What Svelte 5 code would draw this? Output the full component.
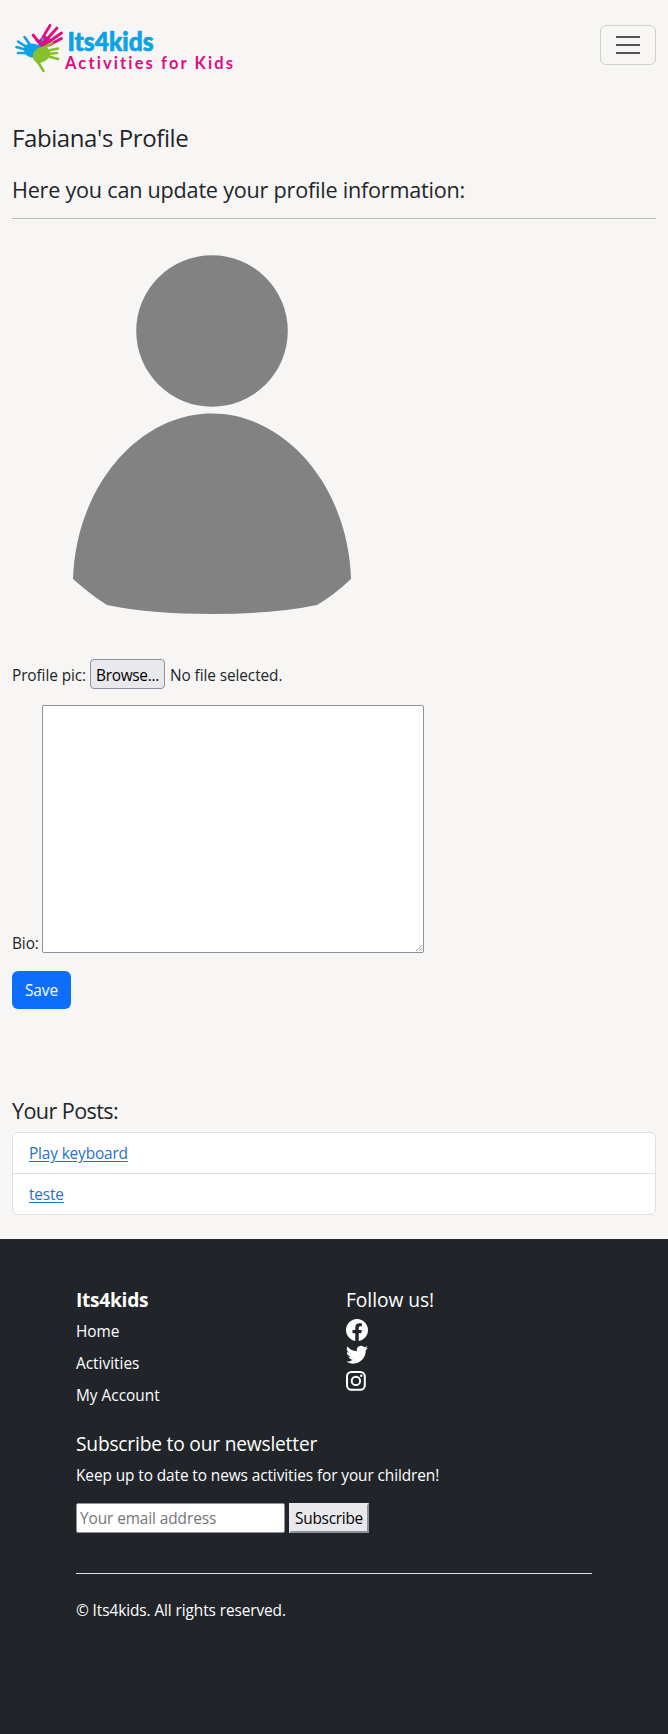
<script>
  const posts = ['Play keyboard', 'teste'];
  const links = ['Home', 'Activities', 'My Account'];
</script>

<div class="page">
  <header>
    <svg class="logo" width="236" height="66" viewBox="0 12 236 66" role="img" aria-label="Its4kids">
      <g stroke="#0fa1e6" stroke-linecap="round" stroke-linejoin="round" fill="none">
        <path stroke-width="2.600" d="M31 46L24.500 37M28 48L18 41.500M27 50L16.500 47M28 53L18 53" />
        <path fill="#0fa1e6" stroke-width="1.500" d="M25 46Q31 43 36 45L41 46L43 49L34 57Q28 57 25 52Z" />
      </g>
      <g stroke="#df0d83" stroke-linecap="round" stroke-linejoin="round" fill="none">
        <path stroke-width="2.800" d="M43 37L50 25.500M47 39L57 28M50 41L61.500 33M51 44L61.500 38.500M38 41L33 35" />
        <path fill="#df0d83" stroke-width="1.500" d="M36 40L39 41L44 36L51 40L51 45L45 47L40 45Z" />
      </g>
      <path fill="#0fa1e6" d="M41 39l2.500-2 1 3-3 2z" />
      <g stroke="#86c02b" stroke-linecap="round" stroke-linejoin="round" fill="none">
        <path stroke-width="2.600" d="M46 51L58 48.500M48 54L57 53M47 56L58 59M43 48L52 43M38 62L43.500 71" />
        <path fill="#86c02b" stroke-width="1.500" d="M34 53Q37 48 46 47L50 53Q48 60 42 61.500L38 63Q32 59 34 53Z" />
      </g>
      <text class="brand" x="67.500" y="50.500" textLength="86" lengthAdjust="spacingAndGlyphs">Its4kids</text>
      <text class="tagline" x="65" y="69" textLength="168">Activities for Kids</text>
    </svg>
    <button class="toggler" aria-label="Menu">
      <svg width="30" height="30" viewBox="0 0 30 30"><path stroke="#545556" stroke-width="2" d="M3 7h24M3 15h24M3 23h24" /></svg>
    </button>
  </header>

  <main>
    <h1>Fabiana's Profile</h1>
    <h2>Here you can update your profile information:</h2>
    <hr />
    <svg class="avatar" width="400" height="400" viewBox="12 235 400 400" fill="#828282">
      <circle cx="212" cy="331" r="75.800" />
      <path d="M73 579C76 486 139 413.500 212 413.500S348 486 351 579Q334 595 317 605Q274 614 212 614T107 605Q91 595 73 579Z" />
    </svg>
    <div class="file-row">
      <span class="pic-label">Profile pic:</span>
      <button class="browse">Browse...</button>
      <span class="nofile">No file selected.</span>
    </div>
    <div class="bio-row">
      <span class="bio-label">Bio:</span>
      <div class="area">
        <svg width="6" height="6" viewBox="0 0 6 6"><path stroke="#999" stroke-width=".8" d="M0 6L6 0M3 6L6 3" /></svg>
      </div>
    </div>
    <button class="save">Save</button>
    <h2 class="posts-title">Your Posts:</h2>
    <ul class="posts">
      {#each posts as post}
        <li><a href="#post">{post}</a></li>
      {/each}
    </ul>
  </main>

  <footer>
    <div class="cols">
      <div class="col">
        <h5 class="strong">Its4kids</h5>
        {#each links as link}
          <p class="link">{link}</p>
        {/each}
      </div>
      <div class="col">
        <h5 class="follow">Follow us!</h5>
        <div class="social">
          <svg width="22" height="22" viewBox="0 0 16 16" fill="#fff"><path d="M16 8.049c0-4.446-3.582-8.050-8-8.050C3.580 0-.002 3.603-.002 8.050c0 4.017 2.926 7.347 6.750 7.951v-5.625h-2.030V8.050H6.750V6.275c0-2.017 1.195-3.131 3.022-3.131.876 0 1.791.157 1.791.157v1.980h-1.009c-.993 0-1.303.621-1.303 1.258v1.510h2.218l-.354 2.326H9.250V16c3.824-.604 6.750-3.934 6.750-7.951z" /></svg>
          <svg class="bird" width="22" height="22" viewBox="0 0 16 16" fill="#fff"><path d="M5.026 15c6.038 0 9.341-5.003 9.341-9.334 0-.140 0-.282-.006-.422A6.685 6.685 0 0 0 16 3.542a6.658 6.658 0 0 1-1.889.518 3.301 3.301 0 0 0 1.447-1.817 6.533 6.533 0 0 1-2.087.793A3.286 3.286 0 0 0 7.875 6.030a9.325 9.325 0 0 1-6.767-3.429 3.289 3.289 0 0 0 1.018 4.382A3.323 3.323 0 0 1 .640 6.575v.045a3.288 3.288 0 0 0 2.632 3.218 3.203 3.203 0 0 1-.865.115 3.230 3.230 0 0 1-.614-.057 3.283 3.283 0 0 0 3.067 2.277A6.588 6.588 0 0 1 .780 13.580a6.320 6.320 0 0 1-.780-.045A9.344 9.344 0 0 0 5.026 15z" /></svg>
          <svg class="insta" width="20" height="20" viewBox="0 0 20 20" fill="none" stroke="#fff" stroke-width="2"><rect x="1" y="1" width="17.800" height="17.800" rx="4.500" /><circle cx="9.900" cy="9.900" r="4.200" /><circle cx="15.200" cy="4.700" r="1.200" fill="#fff" stroke="none" /></svg>
        </div>
      </div>
    </div>
    <h5 class="subhead">Subscribe to our newsletter</h5>
    <p class="keep">Keep up to date to news activities for your children!</p>
    <div class="newsletter">
      <input type="email" placeholder="Your email address" />
      <button class="subscribe">Subscribe</button>
    </div>
    <hr class="line" />
    <p class="copy">© Its4kids. All rights reserved.</p>
  </footer>
</div>

<style>
  :global(body) { margin: 0; }
  * { box-sizing: border-box; }
  .page {
    width: 668px;
    height: 1734px;
    overflow: hidden;
    display: flex;
    flex-direction: column;
    background: #f7f6f5;
    color: #212529;
    font: 15.400px/24px "Open Sans", sans-serif;
    letter-spacing: -0.090px;
  }
  h1, h2, h5, p, ul { margin: 0; padding: 0; font-weight: 400; }
  button, input { font: inherit; letter-spacing: inherit; margin: 0; }
  header { display: flex; justify-content: space-between; height: 90px; padding: 12px 12px 0 0; }
  .logo { display: block; letter-spacing: 0; }
  .brand { font: 900 26.500px Lato, sans-serif; fill: #0fa1e6; stroke: #0fa1e6; stroke-width: .7px; stroke-linejoin: round; }
  .tagline { font: 700 16.500px Lato, sans-serif; font-variant-ligatures: none; fill: #df0d83; }
  .toggler { width: 56px; height: 40px; margin-top: 13px; padding: 0 12px; border: 1px solid #cfcfce; border-radius: 6px; background: none; }
  .toggler svg { display: block; }
  main { height: 1149px; padding: 33px 12px 0; }
  h1 { font-size: 24px; line-height: 30px; letter-spacing: -0.400px; }
  h2 { font-size: 21.600px; line-height: 27px; margin-top: 23px; letter-spacing: -0.220px; }
  hr { height: 1px; border: 0; margin: 15px 0 0; background: #bdbdbc; }
  .avatar { display: block; margin-top: 16px; }
  .file-row { display: flex; height: 30px; margin-top: 24px; line-height: 34px; }
  .pic-label { width: 78px; white-space: nowrap; }
  .browse { width: 75px; height: 30px; margin-right: 5px; padding: 3px 0 0; line-height: 25px; border: 1px solid #8f8f9d; border-radius: 4px; background: #e9e9ed; color: #000; letter-spacing: -0.300px; }
  .bio-row { display: flex; align-items: flex-end; margin-top: 16px; }
  .bio-label { width: 30px; height: 21px; }
  .area { display: flex; align-items: flex-end; justify-content: flex-end; width: 382px; height: 248px; padding: 1px; border: 1px solid #8f8f9d; border-radius: 2px; background: #fff; }
  .save { display: block; width: 59px; height: 38px; margin-top: 18px; padding: 2px 0 0; border: 0; border-radius: 6px; background: #0d6efd; color: #fff; }
  .posts-title { margin-top: 88px; letter-spacing: -0.600px; }
  .posts { margin-top: 8px; list-style: none; border: 1px solid #dee0e3; border-radius: 6px; background: #fff; }
  .posts li { height: 40px; padding: 9px 16px 0; }
  .posts li + li { height: 41px; border-top: 1px solid #dee0e3; }
  .posts a { color: #2a6fd0; text-decoration: underline; text-underline-offset: 2px; letter-spacing: -0.150px; }
  footer { flex: 1; padding: 49px 76px 0; background: #212529; color: #fff; }
  .cols { display: grid; grid-template-columns: 270px 1fr; height: 130px; }
  h5 { font-size: 19.200px; line-height: 24px; letter-spacing: -0.200px; }
  .strong { font-weight: 700; letter-spacing: -0.300px; }
  .follow { letter-spacing: -0.050px; }
  .link { height: 32px; line-height: 24px; letter-spacing: 0; }
  .strong + .link { margin-top: 8px; }
  .social { display: flex; flex-direction: column; align-items: flex-start; margin-top: 7px; }
  .bird { margin-top: 2px; }
  .insta { margin-top: 6px; }
  .subhead { margin-top: 14px; }
  .keep { margin-top: 8px; }
  .newsletter { display: flex; gap: 4px; margin-top: 15px; }
  input { width: 209px; height: 30px; padding: 1px 3px; border: 1px solid #8f8f9d; border-radius: 2px; background: #fff; }
  input::placeholder { color: #757575; opacity: 1; }
  .subscribe { width: 80px; height: 30px; padding: 2px 0 0; line-height: 24px; border: 2px solid; border-color: #e9e9ed #8f8f9d #8f8f9d #e9e9ed; background: #e9e9ed; color: #000; letter-spacing: -0.250px; }
  .line { margin-top: 40px; background: #dee2e6; }
  .copy { margin-top: 25px; }
</style>
